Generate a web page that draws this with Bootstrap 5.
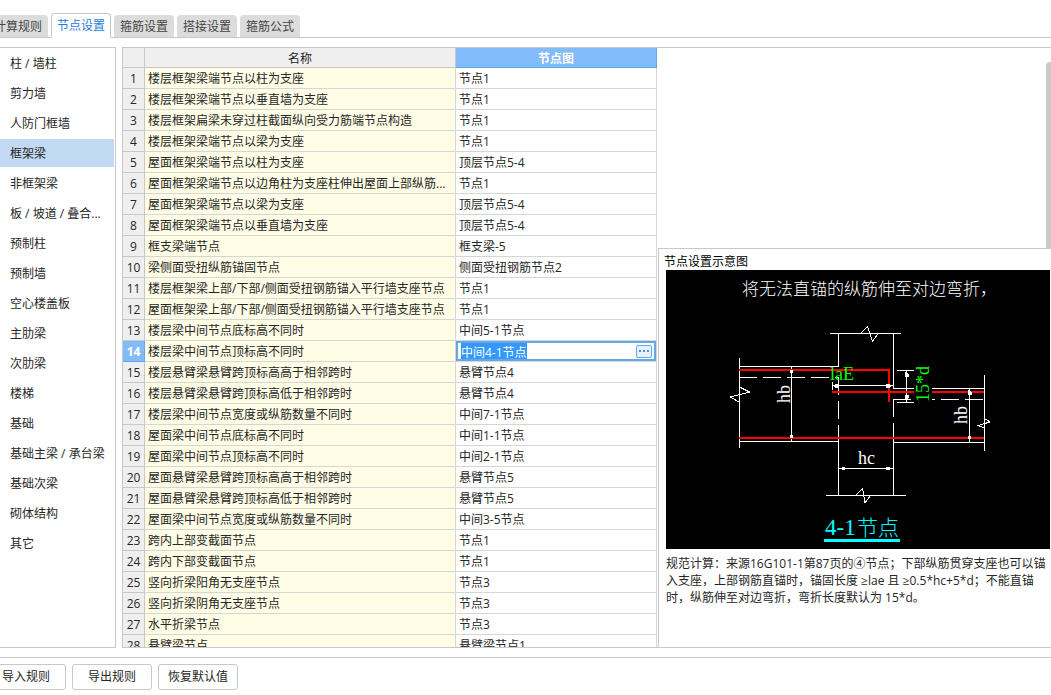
<!DOCTYPE html>
<html lang="zh-CN">
<head>
<meta charset="utf-8">
<meta name="viewport" content="width=device-width, initial-scale=1">
<title>节点设置</title>
<link href="https://cdn.jsdelivr.net/npm/bootstrap@5.3.0/dist/css/bootstrap.min.css" rel="stylesheet">
<style>
  :root { --line: #c8c8c8; --grid: #d6d6d6; --accent: #65a6e6; }
  body { font: 12px/20px "Open Sans", "Noto Sans CJK SC", sans-serif; color: #262626; background: #fff; }
  .bleed { margin-left: -12px; }
  .rule-tabs { height: 38px; gap: 3px; border-bottom: 1px solid var(--line); }
  .rule-tabs .nav-link { width: 60px; height: 22px; padding: 0; line-height: 24px; text-align: center; white-space: nowrap;
    color: #444; background: #dcdcdc; border: 0; border-radius: 4px 4px 0 0; }
  .rule-tabs .nav-link.active { height: 25px; margin-bottom: -1px; line-height: 24px; color: #1f7be0; background: #fff;
    border: 1px solid var(--line); border-bottom-color: #fff; }
  .workspace { padding: 9px 0; gap: 6px; border-bottom: 1px solid var(--line); }
  .part-list { width: 116px; border: 1px solid var(--line); border-left: 0; padding: 1px 1px 0 0; }
  .part-list .list-group-item { height: 28px; margin-bottom: 2px; padding: 0 0 0 10px; line-height: 30px; border: 0;
    color: #262626; background: #fff; white-space: nowrap; border-radius: 0; }
  .part-list .list-group-item.active { background: #c1d9f2; margin-top: 0; }
  .rule-pane { border: 1px solid var(--line); border-right: 0; }
  .rule-grid { width: 534px; margin-right: 1px; table-layout: fixed; border-collapse: separate; border-spacing: 0; }
  .rule-grid th, .rule-grid td { height: 21px; padding: 2px 3px 0; line-height: 18px; white-space: nowrap; overflow: hidden;
    border-right: 1px solid var(--grid); border-bottom: 1px solid var(--grid); }
  .rule-grid th { padding: 2px 0 0; text-align: center; font-weight: 400; background: #efefef; border-color: var(--line); }
  .rule-grid thead th { height: 20px; line-height: 17px; }
  .rule-grid td:nth-child(2) { background: #fffde6; }
  .rule-grid .on { color: #fff; font-weight: 700; background: #82bbfa; border-color: var(--accent); }
  .rule-grid td.editing { padding: 0; }
  .cell-editor { height: 20px; border: 2px solid var(--accent); padding: 0 2px 0 3px; }
  .cell-editor input { min-width: 0; height: 16px; padding: 1px 0 0; border: 0; outline: 0; line-height: 15px; color: #262626; }
  .cell-editor input::selection { color: #fff; background: #3399ff; }
  .cell-editor button { width: 16px; height: 13px; padding: 0; border: 1px solid var(--accent); border-radius: 2px; background: #e9f2fc; }
  .cell-editor svg, .diagram { display: block; }
  .blank-area { height: 200px; padding-top: 14px; }
  .scroll-thumb { width: 5px; background: #cacaca; border-radius: 4px 0 0 0; }
  .preview { border-top: 1px solid var(--line); border-left: 1px solid var(--line); padding: 4px 1px 0 7px; }
  .preview h2 { height: 17px; margin: 0 0 0 -2px; font-size: 12px; line-height: 18px; font-weight: 400; color: #000; }
  .preview p { margin: 6px 0 0; line-height: 17px; white-space: nowrap; }
  .diagram { width: 100%; height: auto; background: #000; font-family: "Liberation Serif", serif; }
  .diagram .cjk { font-family: "Noto Sans CJK SC", sans-serif; font-weight: 300; }
  .actions { padding: 6px 0 5px; gap: 6px; margin-left: -14px; }
  .actions .btn { width: 80px; height: 26px; padding: 0; font-size: 12px; line-height: 24px; color: #262626; background: #fff;
    border: 1px solid var(--line); border-radius: 3px; }
</style>
</head>
<body class="vh-100 d-flex flex-column overflow-hidden">
<nav class="rule-tabs nav flex-nowrap align-items-end flex-shrink-0" aria-label="设置">
  <a class="nav-link bleed" href="#">计算规则</a>
  <a class="nav-link active" href="#" aria-current="page">节点设置</a>
  <a class="nav-link" href="#">箍筋设置</a>
  <a class="nav-link" href="#">搭接设置</a>
  <a class="nav-link" href="#">箍筋公式</a>
</nav>

<main class="workspace d-flex flex-grow-1 overflow-hidden">
  <div class="part-list list-group rounded-0 flex-shrink-0 overflow-hidden">
    <a class="list-group-item" href="#">柱 / 墙柱</a>
    <a class="list-group-item" href="#">剪力墙</a>
    <a class="list-group-item" href="#">人防门框墙</a>
    <a class="list-group-item active" href="#">框架梁</a>
    <a class="list-group-item" href="#">非框架梁</a>
    <a class="list-group-item" href="#">板 / 坡道 / 叠合...</a>
    <a class="list-group-item" href="#">预制柱</a>
    <a class="list-group-item" href="#">预制墙</a>
    <a class="list-group-item" href="#">空心楼盖板</a>
    <a class="list-group-item" href="#">主肋梁</a>
    <a class="list-group-item" href="#">次肋梁</a>
    <a class="list-group-item" href="#">楼梯</a>
    <a class="list-group-item" href="#">基础</a>
    <a class="list-group-item" href="#">基础主梁 / 承台梁</a>
    <a class="list-group-item" href="#">基础次梁</a>
    <a class="list-group-item" href="#">砌体结构</a>
    <a class="list-group-item" href="#">其它</a>
  </div>

  <section class="rule-pane d-flex flex-grow-1 overflow-hidden">
    <div class="flex-shrink-0 overflow-hidden">
      <table class="rule-grid">
        <colgroup><col style="width:22px"><col style="width:311px"><col style="width:201px"></colgroup>
        <thead><tr><th></th><th scope="col">名称</th><th scope="col" class="on">节点图</th></tr></thead>
        <tbody>
          <tr><th scope="row">1</th><td>楼层框架梁端节点以柱为支座</td><td>节点1</td></tr>
          <tr><th scope="row">2</th><td>楼层框架梁端节点以垂直墙为支座</td><td>节点1</td></tr>
          <tr><th scope="row">3</th><td>楼层框架扁梁未穿过柱截面纵向受力筋端节点构造</td><td>节点1</td></tr>
          <tr><th scope="row">4</th><td>楼层框架梁端节点以梁为支座</td><td>节点1</td></tr>
          <tr><th scope="row">5</th><td>屋面框架梁端节点以柱为支座</td><td>顶层节点5-4</td></tr>
          <tr><th scope="row">6</th><td>屋面框架梁端节点以边角柱为支座柱伸出屋面上部纵筋...</td><td>节点1</td></tr>
          <tr><th scope="row">7</th><td>屋面框架梁端节点以梁为支座</td><td>顶层节点5-4</td></tr>
          <tr><th scope="row">8</th><td>屋面框架梁端节点以垂直墙为支座</td><td>顶层节点5-4</td></tr>
          <tr><th scope="row">9</th><td>框支梁端节点</td><td>框支梁-5</td></tr>
          <tr><th scope="row">10</th><td>梁侧面受扭纵筋锚固节点</td><td>侧面受扭钢筋节点2</td></tr>
          <tr><th scope="row">11</th><td>楼层框架梁上部/下部/侧面受扭钢筋锚入平行墙支座节点</td><td>节点1</td></tr>
          <tr><th scope="row">12</th><td>屋面框架梁上部/下部/侧面受扭钢筋锚入平行墙支座节点</td><td>节点1</td></tr>
          <tr><th scope="row">13</th><td>楼层梁中间节点底标高不同时</td><td>中间5-1节点</td></tr>
          <tr><th scope="row" class="on">14</th><td>楼层梁中间节点顶标高不同时</td>
            <td class="editing"><div class="cell-editor d-flex align-items-center">
              <input class="flex-grow-1" id="nodeValue" type="text" value="中间4-1节点" aria-label="节点图">
              <button type="button" aria-label="选择节点"><svg width="14" height="11" fill="#3f8fe0"><path d="M2 4h2v2H2zM6 4h2v2H6zM10 4h2v2h-2z"/></svg></button>
            </div></td></tr>
          <tr><th scope="row">15</th><td>楼层悬臂梁悬臂跨顶标高高于相邻跨时</td><td>悬臂节点4</td></tr>
          <tr><th scope="row">16</th><td>楼层悬臂梁悬臂跨顶标高低于相邻跨时</td><td>悬臂节点4</td></tr>
          <tr><th scope="row">17</th><td>楼层梁中间节点宽度或纵筋数量不同时</td><td>中间7-1节点</td></tr>
          <tr><th scope="row">18</th><td>屋面梁中间节点底标高不同时</td><td>中间1-1节点</td></tr>
          <tr><th scope="row">19</th><td>屋面梁中间节点顶标高不同时</td><td>中间2-1节点</td></tr>
          <tr><th scope="row">20</th><td>屋面悬臂梁悬臂跨顶标高高于相邻跨时</td><td>悬臂节点5</td></tr>
          <tr><th scope="row">21</th><td>屋面悬臂梁悬臂跨顶标高低于相邻跨时</td><td>悬臂节点5</td></tr>
          <tr><th scope="row">22</th><td>屋面梁中间节点宽度或纵筋数量不同时</td><td>中间3-5节点</td></tr>
          <tr><th scope="row">23</th><td>跨内上部变截面节点</td><td>节点1</td></tr>
          <tr><th scope="row">24</th><td>跨内下部变截面节点</td><td>节点1</td></tr>
          <tr><th scope="row">25</th><td>竖向折梁阳角无支座节点</td><td>节点3</td></tr>
          <tr><th scope="row">26</th><td>竖向折梁阴角无支座节点</td><td>节点3</td></tr>
          <tr><th scope="row">27</th><td>水平折梁节点</td><td>节点3</td></tr>
          <tr><th scope="row">28</th><td>悬臂梁节点</td><td>悬臂梁节点1</td></tr>
        </tbody>
      </table>
    </div>

    <div class="d-flex flex-column flex-grow-1 overflow-hidden">
      <div class="blank-area d-flex justify-content-end flex-shrink-0"><div class="scroll-thumb"></div></div>
      <div class="preview flex-grow-1 overflow-hidden">
        <h2>节点设置示意图</h2>
        <svg class="diagram" viewBox="666 270 384 279" role="img" aria-label="4-1节点">
          <text class="cjk" x="742" y="295" font-size="17" fill="#fff">将无法直锚的纵筋伸至对边弯折，</text>
          <g fill="none" stroke="#fff" stroke-width="1" shape-rendering="crispEdges">
            <!-- column outline -->
            <path d="M830 333.5H901M838.5 333V367M838.5 377V395M838.5 401V419M838.5 425V495M893.5 333V389M893.5 399V417M893.5 423V495M826 495.5H906"/>
            <path d="M861 333L867.500 326.500L872.500 341.500L878 333.500M856 495L862.500 488.500L865 503L870 496"/>
            <!-- left beam -->
            <path d="M739.5 358V448M739 366.5H839M739 441.5H839M739 377.5H757M763 377.5H781M787 377.5H805M811 377.5H829M835 377.5H839"/>
            <path d="M739.500 387L749.500 392L730.500 397L739 402"/>
            <!-- right beam -->
            <path d="M984.5 375V451M893 388.5H914M932 388.5H984M893 442.5H984M893 399.5H911M932 399.5H935M941 399.5H959M965 399.5H983"/>
            <path d="M984.500 418.500L990 422L978 425.500L984.500 428"/>
            <!-- dimension lines -->
            <path d="M791.5 367V441M832.5 382V390M832 385.5H893M906.5 370V402M897 370.5H914M897 402.5H914M969.5 388V442M839 468.5H893"/>
          </g>
          <g fill="none" stroke="red" stroke-width="2" shape-rendering="crispEdges">
            <path d="M739 370H889V402M832 392H914M932 392H984M739 438H984"/>
          </g>
          <path fill="#fff" shape-rendering="crispEdges" d="M790 370h3v3h-3zM790 435h3v3h-3zM833 386l3-2h3v4h-3zM892 386l-3-2h-3v4h3zM906.500 371l2 3v3h-4v-3zM906.500 402l2-4v-3h-4v3zM969.500 389l2 3v3h-4v-3zM969.500 441l2-4h-1v-1h-3v1zM839 468h3v-1h3v3h-3v-1h-3zM893 468h-3v-1h-4v3h4v-1h3z"/>
          <text x="830" y="380" font-size="18" fill="#0f0">laE</text>
          <text transform="translate(929 402) rotate(-90)" font-size="18" fill="#0f0">15*d</text>
          <g fill="#fff" font-size="18">
            <text transform="translate(790 403) rotate(-90)">hb</text>
            <text transform="translate(967 424) rotate(-90)">hb</text>
            <text x="858" y="464">hc</text>
          </g>
          <g fill="#0ff">
            <text x="825" y="535" font-size="23">4-1</text>
            <text class="cjk" x="857" y="535" font-size="21">节点</text>
            <path d="M824 539h76v3h-76z"/>
          </g>
        </svg>
        <p>规范计算：来源16G101-1第87页的④节点；下部纵筋贯穿支座也可以锚<br>入支座，上部钢筋直锚时，锚固长度 ≥lae 且 ≥0.5*hc+5*d；不能直锚<br>时，纵筋伸至对边弯折，弯折长度默认为 15*d。</p>
      </div>
    </div>
  </section>
</main>

<footer class="actions d-flex flex-shrink-0">
  <button class="btn" type="button">导入规则</button>
  <button class="btn" type="button">导出规则</button>
  <button class="btn" type="button">恢复默认值</button>
</footer>
<script src="https://cdn.jsdelivr.net/npm/bootstrap@5.3.0/dist/js/bootstrap.bundle.min.js"></script>
<script>
  const editor = document.getElementById('nodeValue');
  editor.focus();
  editor.select();
</script>
</body>
</html>
